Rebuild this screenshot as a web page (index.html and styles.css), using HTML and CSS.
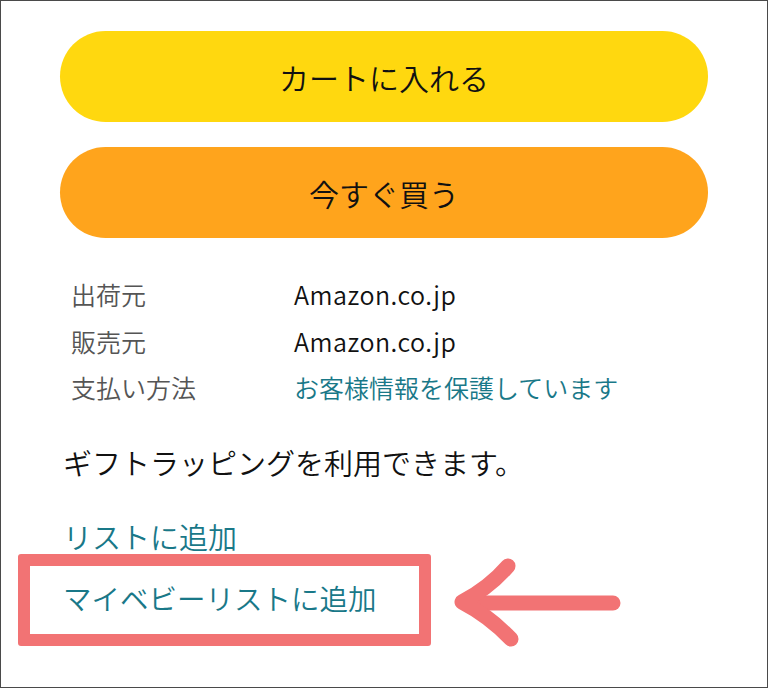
FILE: index.html
```html
<!DOCTYPE html>
<html lang="ja">
<head>
<meta charset="UTF-8">
<meta name="viewport" content="width=device-width, initial-scale=1.0">
<title>カートに入れる</title>
<link rel="stylesheet" href="styles.css">
</head>
<body>
<div class="frame">
    <button class="btn btn-cart">カートに入れる</button>
    <button class="btn btn-buy">今すぐ買う</button>

    <div class="details">
        <div class="label">出荷元</div>
        <div class="value latin">Amazon.co.jp</div>
        <div class="label">販売元</div>
        <div class="value latin">Amazon.co.jp</div>
        <div class="label">支払い方法</div>
        <div class="value link">お客様情報を保護しています</div>
    </div>

    <p class="gift">ギフトラッピングを利用できます。</p>

    <a class="list-link" href="#">リストに追加</a>

    <div class="callout">
        <div class="highlight">
            <a class="list-link" href="#">マイベビーリストに追加</a>
        </div>
        <svg class="arrow" width="175" height="95" viewBox="0 0 175 95">
            <path d="M162 50 L16 50" />
            <path d="M57 13 Q38 35 11 49 Q38 63 60 86" />
        </svg>
    </div>
</div>
</body>
</html>
```

FILE: styles.css
```css
body {
    margin: 0;
    font-family: "Noto Sans CJK JP", "Noto Sans", sans-serif;
    font-weight: 350;
    background-color: #fff;
    color: #111;
}
.frame {
    width: 768px;
    height: 688px;
    box-sizing: border-box;
    border: 1px solid #4a4a4a;
    padding: 30px 60px 0 59px;
}
.btn {
    display: block;
    width: 648px;
    height: 91px;
    border: none;
    border-radius: 46px;
    font-family: inherit;
    font-weight: 350;
    font-size: 30px;
    color: #111;
    cursor: pointer;
}
.btn-cart {
    background-color: #ffd80f;
    margin-bottom: 25px;
}
.btn-buy {
    background-color: #ffa41c;
}
.details {
    display: grid;
    grid-template-columns: 223px 1fr;
    margin: 33px 0 0 11px;
    font-size: 25px;
    line-height: 46.5px;
}
.label {
    color: #555;
}
.value {
    color: #111;
}
.latin {
    letter-spacing: 0.5px;
}
.link {
    color: #197888;
}
.gift {
    margin: 31px 0 0 3px;
    font-size: 29px;
    line-height: 40px;
}
.list-link {
    display: block;
    color: #197888;
    text-decoration: none;
    font-size: 29px;
    line-height: 40px;
}
.frame > .list-link {
    margin: 34px 0 0 3px;
}
.callout {
    display: flex;
    align-items: center;
    margin: -3px 0 0 -42px;
}
.highlight {
    width: 413px;
    height: 92px;
    box-sizing: border-box;
    border: 12px solid #f27374;
    border-radius: 3px;
    padding: 12px 0 0 33px;
}
.highlight .list-link {
    font-size: 28.5px;
}
.arrow {
    margin-left: 20px;
    fill: none;
    stroke: #f27374;
    stroke-width: 15;
    stroke-linecap: round;
    stroke-linejoin: round;
}
```
